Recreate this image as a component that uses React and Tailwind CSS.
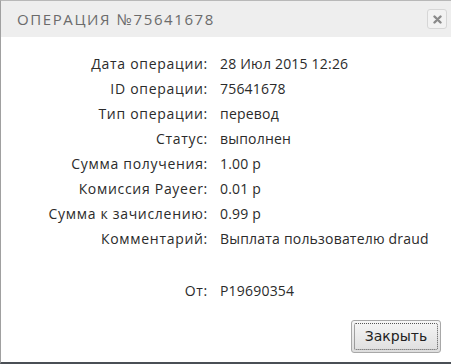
const rows = [
  ["Дата операции:", "28 Июл 2015 12:26"],
  ["ID операции:", "75641678"],
  ["Тип операции:", "перевод"],
  ["Статус:", "выполнен"],
  ["Сумма получения:", "1.00 р"],
  ["Комиссия Payeer:", "0.01 р"],
  ["Сумма к зачислению:", "0.99 р"],
  ["Комментарий:", "Выплата пользователю draud"],
];

const Row = ({label, value}) => (
  <div className="flex h-[25px] items-center">
    <div className="w-[207px] shrink-0 text-right whitespace-nowrap tracking-[0.7px]">{label}</div>
    <div className="pl-[12px] whitespace-nowrap tracking-[0.2px]">{value}</div>
  </div>
);

export default function App() {
  return (
    <div className="w-[451px] h-[364px] bg-white flex flex-col border-l border-t border-b-2 border-l-[#a0a0a0] border-t-[#b8b8b8] border-b-[#4a4f55] font-['Open_Sans',sans-serif] overflow-hidden">
      {/* Header */}
      <div className="h-[36px] shrink-0 bg-[#eeeeee] flex items-center justify-between pl-[16px] pr-[4px]">
        <span className="text-[15px] tracking-[1.6px] text-[#6b6b6b] uppercase">
          Операция №75641678
        </span>
        <button className="w-[20px] h-[20px] rounded-[3px] border border-[#d6d6d6] bg-[#f2f2f2] flex items-center justify-center">
          <svg width="9" height="9" viewBox="0 0 9 9">
            <path d="M1.5 1.5 L7.5 7.5 M7.5 1.5 L1.5 7.5" stroke="#8a8a8a" strokeWidth="2.4" strokeLinecap="round" />
          </svg>
        </button>
      </div>

      {/* Body */}
      <div className="flex-1 pt-[14px] text-[14px] text-[#2b2b2b]">
        {rows.map(([l, v]) => (
          <Row key={l} label={l} value={v} />
        ))}
        <div className="h-[27px]" />
        <Row label="От:" value="P19690354" />
      </div>

      {/* Footer */}
      <div className="flex justify-end pr-[10px] pb-[9px]">
        <button className="w-[90px] h-[33px] rounded-[3px] border border-[#a8a8a8] bg-gradient-to-b from-[#f6f6f6] to-[#dedede] p-[2px]">
          <span className="flex h-full w-full items-center justify-center border border-dotted border-[#555] rounded-[2px] font-['DejaVu_Sans',sans-serif] text-[14px] text-[#222]">
            Закрыть
          </span>
        </button>
      </div>
    </div>
  );
}
